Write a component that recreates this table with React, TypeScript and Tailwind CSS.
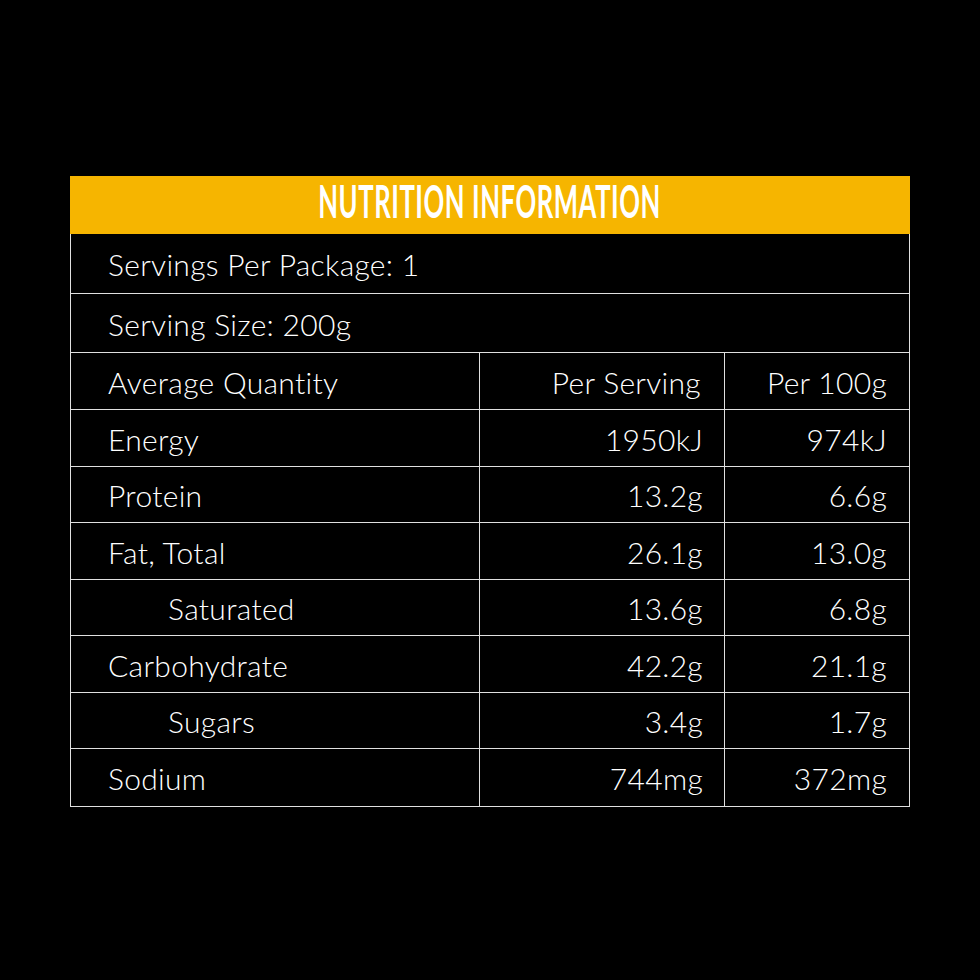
const rows: { label: string; serving: string; per100: string; indent?: boolean }[] = [
  { label: "Energy", serving: "1950kJ", per100: "974kJ" },
  { label: "Protein", serving: "13.2g", per100: "6.6g" },
  { label: "Fat, Total", serving: "26.1g", per100: "13.0g" },
  { label: "Saturated", serving: "13.6g", per100: "6.8g", indent: true },
  { label: "Carbohydrate", serving: "42.2g", per100: "21.1g" },
  { label: "Sugars", serving: "3.4g", per100: "1.7g", indent: true },
  { label: "Sodium", serving: "744mg", per100: "372mg" },
];

export default function App() {
  return (
    <div className="w-[980px] h-[980px] bg-black pt-[176px] pl-[70px]">
      <div className="w-[840px] text-white font-['Lato','Open_Sans',sans-serif] font-light text-[30px] tracking-[0.3px]">
        <div className="h-[58px] bg-[#f6b500] flex items-center justify-center pb-[8px]">
          <span className="inline-block font-['Lato',sans-serif] font-bold text-[45px] leading-none tracking-[1px] text-white scale-x-[0.57]">
            NUTRITION INFORMATION
          </span>
        </div>
        <div className="border-[1.5px] border-t-0 border-[#e0e0e0]">
          <div className="h-[60px] flex items-center pt-[2px] pl-[37px] border-b-[1.5px] border-[#e0e0e0]">
            Servings Per Package: 1
          </div>
          <div className="h-[59px] flex items-center pt-[2px] pl-[37px] border-b-[1.5px] border-[#e0e0e0]">
            Serving Size: 200g
          </div>
          <div className="h-[57px] flex border-b-[1.5px] border-[#e0e0e0]">
            <div className="w-[409px] flex items-center pt-[2px] pl-[37px] border-r-[1.5px] border-[#e0e0e0]">Average Quantity</div>
            <div className="w-[245px] flex items-center justify-end pt-[2px] pr-[23px] border-r-[1.5px] border-[#e0e0e0]">Per Serving</div>
            <div className="flex-1 flex items-center justify-end pt-[2px] pr-[22px]">Per 100g</div>
          </div>
          {rows.map((r, i) => (
            <div
              key={r.label}
              className={`h-[56.5px] flex ${i < rows.length - 1 ? "border-b-[1.5px] border-[#e0e0e0]" : ""}`}
            >
              <div
                className={`w-[409px] flex items-center pt-[3px] border-r-[1.5px] border-[#e0e0e0] ${
                  r.indent ? "pl-[97px]" : "pl-[37px]"
                }`}
              >
                {r.label}
              </div>
              <div className="w-[245px] flex items-center justify-end pt-[3px] pr-[21px] border-r-[1.5px] border-[#e0e0e0]">
                {r.serving}
              </div>
              <div className="flex-1 flex items-center justify-end pt-[3px] pr-[22px]">{r.per100}</div>
            </div>
          ))}
        </div>
      </div>
    </div>
  );
}
